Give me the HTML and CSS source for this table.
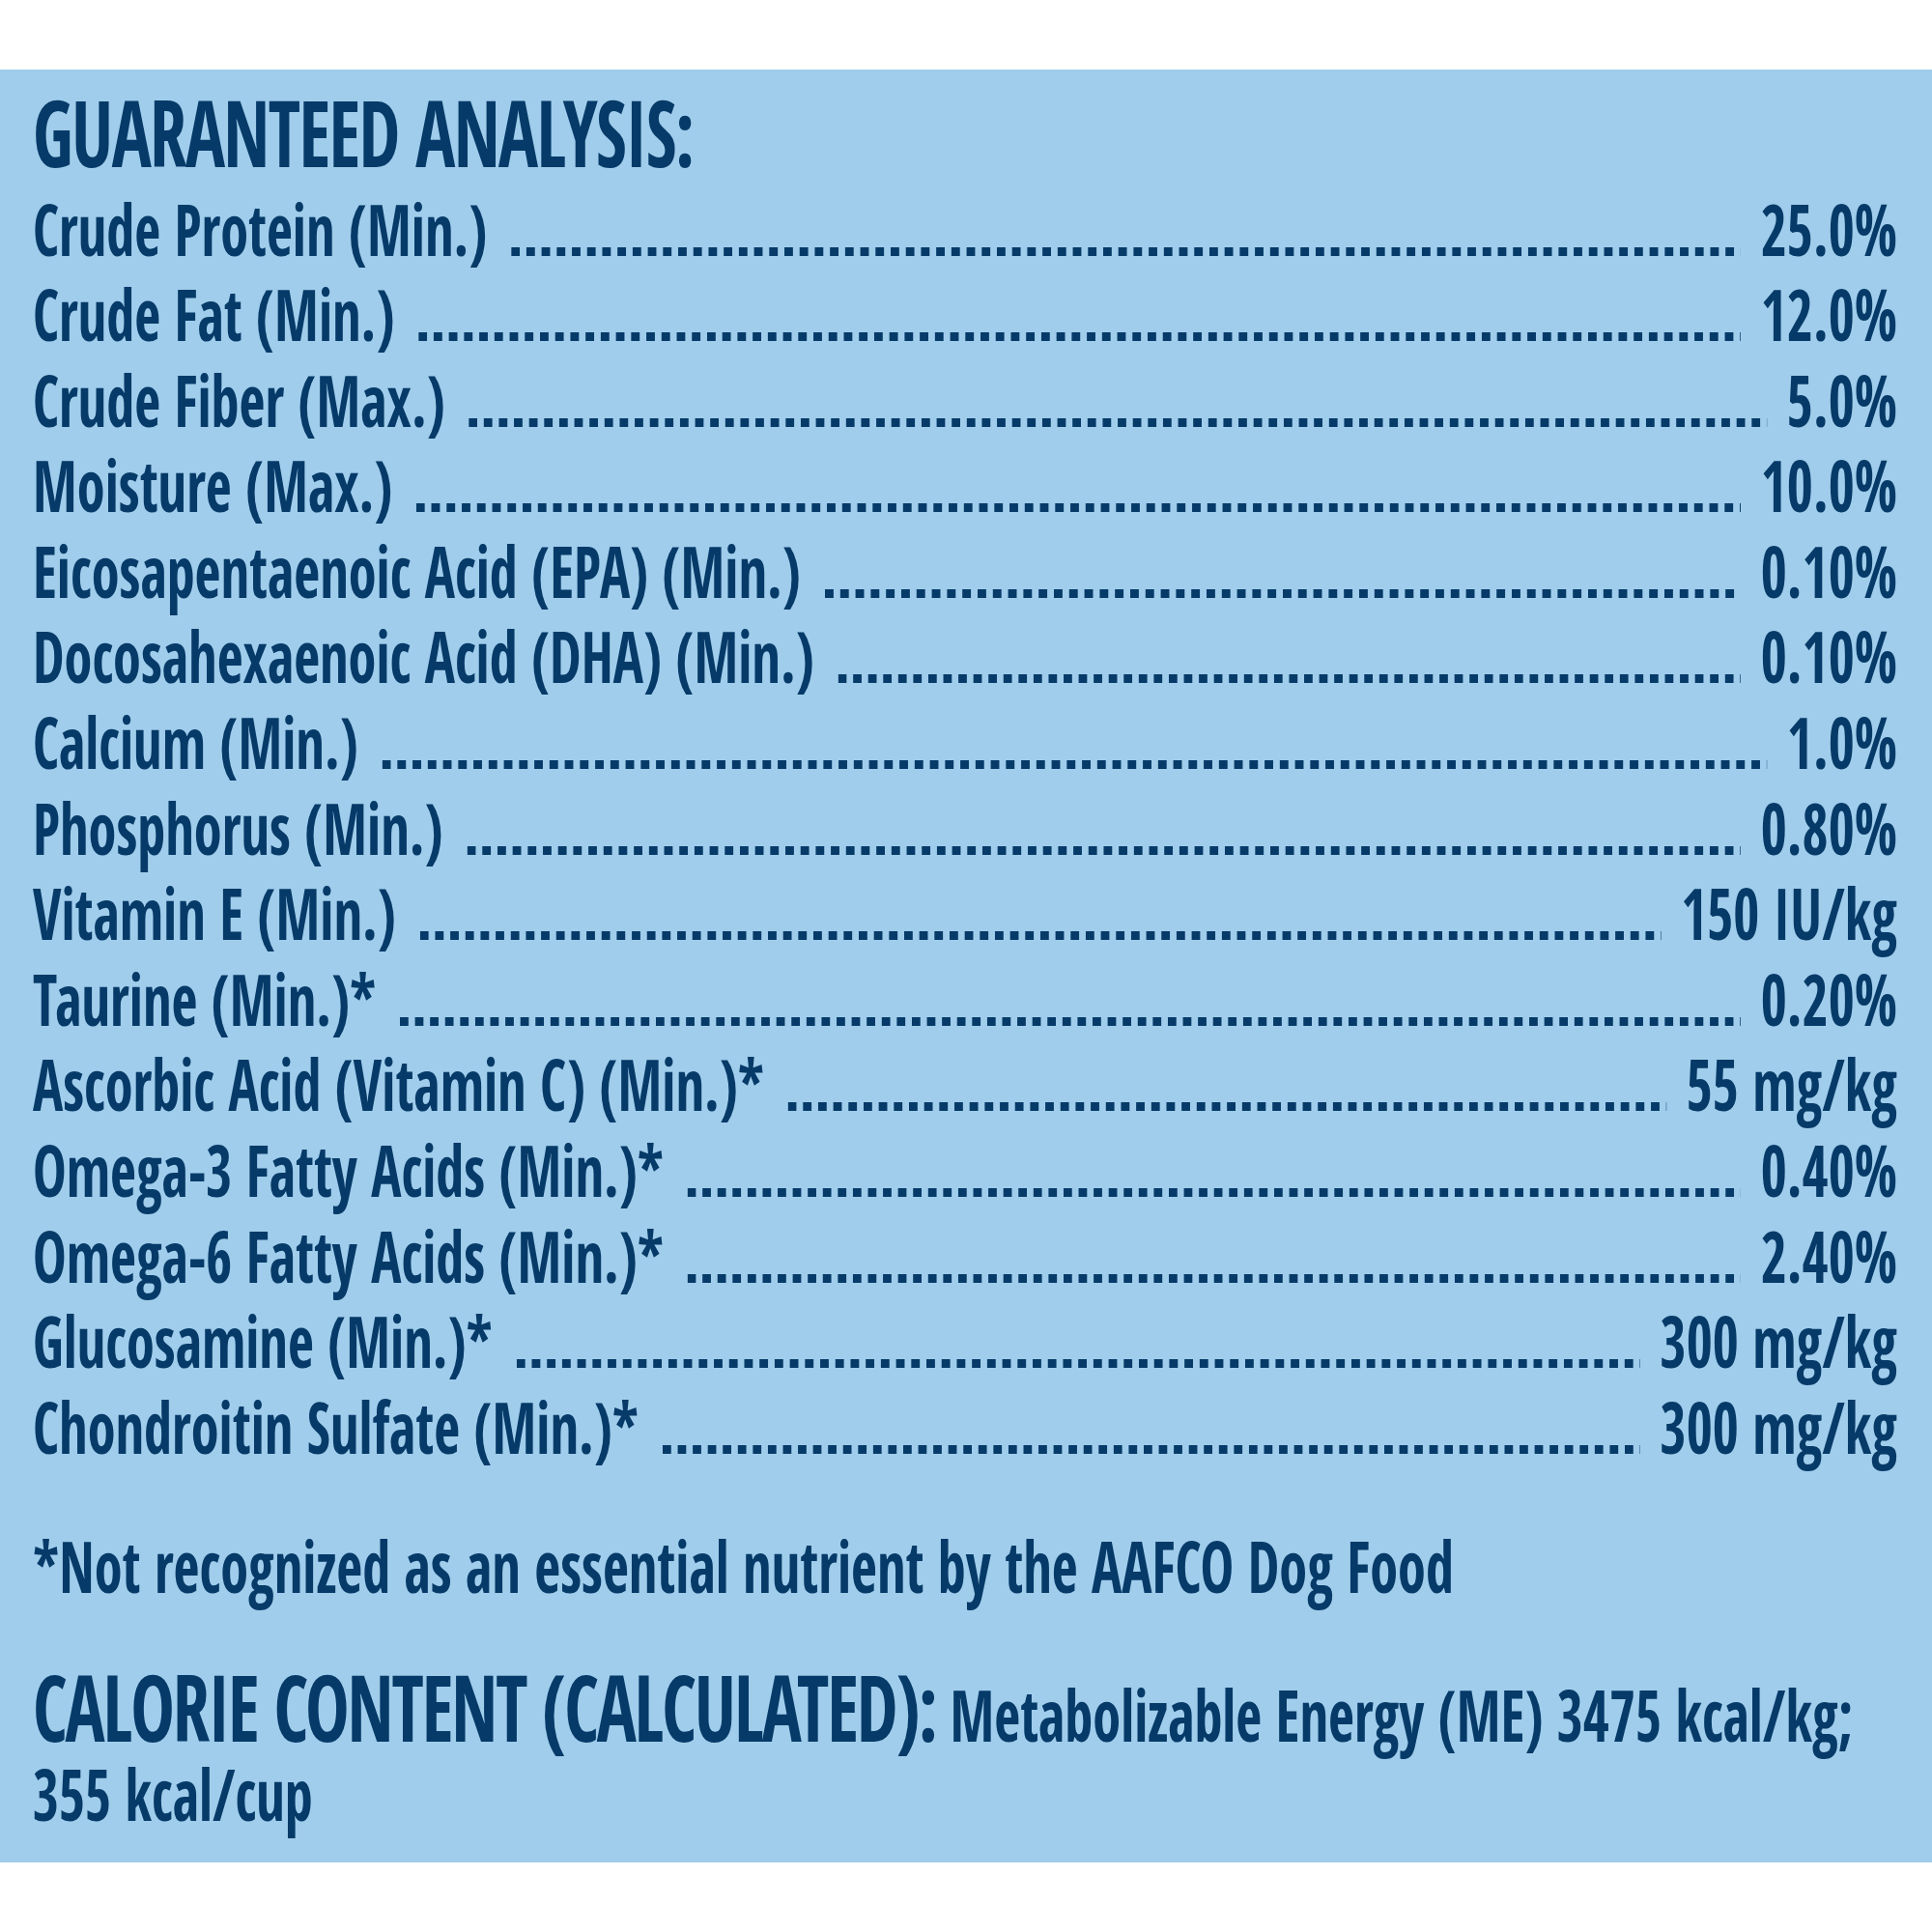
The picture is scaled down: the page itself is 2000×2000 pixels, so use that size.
FILE: index.html
```html
<!DOCTYPE html>
<html lang="en">
<head>
<meta charset="utf-8">
<title>Guaranteed Analysis</title>
<link rel="stylesheet" href="styles.css">
</head>
<body>
<section class="panel">
  <div class="content">
    <h1 class="title">GUARANTEED ANALYSIS:</h1>
    <ul class="rows">
      <li class="row"><span class="label">Crude Protein (Min.)</span><span class="dots"></span><span class="value">25.0%</span></li>
      <li class="row"><span class="label">Crude Fat (Min.)</span><span class="dots"></span><span class="value">12.0%</span></li>
      <li class="row"><span class="label">Crude Fiber (Max.)</span><span class="dots"></span><span class="value">5.0%</span></li>
      <li class="row"><span class="label">Moisture (Max.)</span><span class="dots"></span><span class="value">10.0%</span></li>
      <li class="row"><span class="label">Eicosapentaenoic Acid (EPA) (Min.)</span><span class="dots"></span><span class="value">0.10%</span></li>
      <li class="row"><span class="label">Docosahexaenoic Acid (DHA) (Min.)</span><span class="dots"></span><span class="value">0.10%</span></li>
      <li class="row"><span class="label">Calcium (Min.)</span><span class="dots"></span><span class="value">1.0%</span></li>
      <li class="row"><span class="label">Phosphorus (Min.)</span><span class="dots"></span><span class="value">0.80%</span></li>
      <li class="row"><span class="label">Vitamin E (Min.)</span><span class="dots"></span><span class="value">150 IU/kg</span></li>
      <li class="row"><span class="label">Taurine (Min.)*</span><span class="dots"></span><span class="value">0.20%</span></li>
      <li class="row"><span class="label">Ascorbic Acid (Vitamin C) (Min.)*</span><span class="dots"></span><span class="value">55 mg/kg</span></li>
      <li class="row"><span class="label">Omega-3 Fatty Acids (Min.)*</span><span class="dots"></span><span class="value">0.40%</span></li>
      <li class="row"><span class="label">Omega-6 Fatty Acids (Min.)*</span><span class="dots"></span><span class="value">2.40%</span></li>
      <li class="row"><span class="label">Glucosamine (Min.)*</span><span class="dots"></span><span class="value">300 mg/kg</span></li>
      <li class="row"><span class="label">Chondroitin Sulfate (Min.)*</span><span class="dots"></span><span class="value">300 mg/kg</span></li>
    </ul>
    <p class="note">*Not recognized as an essential nutrient by the AAFCO Dog Food</p>
    <p class="calorie"><span class="cal-title">CALORIE CONTENT (CALCULATED):</span> Metabolizable Energy (ME) 3475 kcal/kg;<br>355 kcal/cup</p>
  </div>
</section>
</body>
</html>
```
FILE: styles.css
```css
html, body {
  margin: 0;
  padding: 0;
  background: #ffffff;
}

.panel {
  margin-top: 72px;
  height: 1856px;
  box-sizing: border-box;
  padding: 14px 36px 0 34px;
  background: #a0cdeb;
  color: #063a68;
  font-family: "Open Sans Condensed", "Open Sans", "Roboto Condensed", sans-serif;
  font-stretch: 75%;
  font-weight: 700;
  overflow-x: clip;
}

/* the label face is narrower than any installed condensed face */
.content {
  width: 125%;
  transform: scaleX(0.8);
  transform-origin: 0 0;
}

.title {
  margin: 0 0 6.5px;
  font-size: 96px;
  line-height: 100px;
  font-weight: 700;
  letter-spacing: -2px;
  white-space: nowrap;
}

.rows {
  list-style: none;
  margin: 0;
  padding: 0;
}

.row {
  display: flex;
  align-items: baseline;
  font-size: 73px;
  line-height: 88.6px;
  white-space: nowrap;
}

.label {
  flex: none;
}

.value {
  flex: none;
}

.dots {
  flex: 1;
  height: 9px;
  margin: 0 26px 0 31px;
  background-image: linear-gradient(to right, #063a68 0, #063a68 11px, transparent 11px);
  background-size: 19.6px 9px;
  background-repeat: round no-repeat;
  background-position: left bottom;
}

.note {
  margin: 56px 0 0;
  font-size: 73px;
  line-height: 88.6px;
  white-space: nowrap;
}

.calorie {
  margin: 58.8px 0 0;
  font-size: 73px;
  line-height: 82px;
  white-space: nowrap;
}

.cal-title {
  font-size: 96px;
  letter-spacing: -2.6px;
}
```
